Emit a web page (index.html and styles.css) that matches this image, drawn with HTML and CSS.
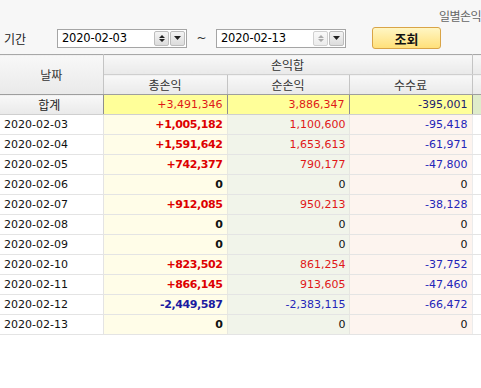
FILE: index.html
```html
<!DOCTYPE html>
<html lang="ko">
<head>
    <meta charset="UTF-8">
    <title>일별손익</title>
    <link rel="stylesheet" href="styles.css">
</head>
<body>
    <div class="top">
        <div class="title">일별손익</div>
        <div class="search">
            <span class="label">기간</span>
            <div class="date-box">
                <span class="date-text">2020-02-03</span>
                <span class="spin">
                    <svg width="10" height="9" viewBox="0 0 10 9"><path d="M5 1 L8 4 L2 4 Z M2 5 L8 5 L5 8 Z" fill="#222"/></svg>
                </span>
                <span class="drop">
                    <svg width="7" height="4" viewBox="0 0 7 4"><path d="M0 0 L7 0 L3.5 4 Z" fill="#222"/></svg>
                </span>
            </div>
            <span class="tilde">~</span>
            <div class="date-box">
                <span class="date-text">2020-02-13</span>
                <span class="spin disabled">
                    <svg width="10" height="9" viewBox="0 0 10 9"><path d="M5 1 L8 4 L2 4 Z M2 5 L8 5 L5 8 Z" fill="#aaa"/></svg>
                </span>
                <span class="drop">
                    <svg width="7" height="4" viewBox="0 0 7 4"><path d="M0 0 L7 0 L3.5 4 Z" fill="#222"/></svg>
                </span>
            </div>
            <button class="btn-search">조회</button>
        </div>
    </div>

    <table class="grid">
        <colgroup>
            <col class="c-date">
            <col class="c-total">
            <col class="c-net">
            <col class="c-fee">
            <col class="c-rest">
        </colgroup>
        <thead>
            <tr class="h1">
                <th rowspan="2">날짜</th>
                <th colspan="3">손익합</th>
                <th></th>
            </tr>
            <tr class="h2">
                <th>총손익</th>
                <th>순손익</th>
                <th>수수료</th>
                <th></th>
            </tr>
        </thead>
        <tbody id="rows">
            <tr class="sum">
                <td class="date">합계</td>
                <td class="red">+3,491,346</td>
                <td class="red">3,886,347</td>
                <td class="blue">-395,001</td>
                <td class="rest"></td>
            </tr>
        </tbody>
    </table>

    <script>
        // daily rows: date, total, net, fee
        const data = [
            ['2020-02-03', '+1,005,182', '1,100,600', '-95,418'],
            ['2020-02-04', '+1,591,642', '1,653,613', '-61,971'],
            ['2020-02-05', '+742,377', '790,177', '-47,800'],
            ['2020-02-06', '0', '0', '0'],
            ['2020-02-07', '+912,085', '950,213', '-38,128'],
            ['2020-02-08', '0', '0', '0'],
            ['2020-02-09', '0', '0', '0'],
            ['2020-02-10', '+823,502', '861,254', '-37,752'],
            ['2020-02-11', '+866,145', '913,605', '-47,460'],
            ['2020-02-12', '-2,449,587', '-2,383,115', '-66,472'],
            ['2020-02-13', '0', '0', '0']
        ];

        function tone(v) {
            if (v === '0') return 'zero';
            return v.startsWith('-') ? 'blue' : 'red';
        }

        const body = document.getElementById('rows');
        data.forEach(r => {
            const tr = document.createElement('tr');
            tr.className = 'row';
            tr.innerHTML = `
                <td class="date">${r[0]}</td>
                <td class="total ${tone(r[1])}">${r[1]}</td>
                <td class="net ${tone(r[2])}">${r[2]}</td>
                <td class="fee ${tone(r[3])}">${r[3]}</td>
                <td class="rest"></td>
            `;
            body.appendChild(tr);
        });
    </script>
</body>
</html>
```

FILE: styles.css
```css
body {
    margin: 0;
    width: 481px;
    height: 388px;
    overflow: hidden;
    background-color: #fff;
    font-family: "DejaVu Sans", "Noto Sans CJK KR", sans-serif;
    font-size: 11px;
    color: #111;
}

/* Top search area */
.top {
    background-color: #f7f7f7;
    height: 54px;
    position: relative;
}

.title {
    position: absolute;
    right: 0;
    top: 7px;
    width: 42px;
    overflow: hidden;
    white-space: nowrap;
    font-family: "Noto Sans CJK KR", sans-serif;
    font-size: 12px;
    letter-spacing: -0.5px;
    color: #666;
}

.search {
    display: flex;
    align-items: center;
    padding-top: 27px;
    padding-left: 4px;
}

.label {
    font-family: "Noto Sans CJK KR", sans-serif;
    font-size: 12px;
    width: 53px;
    color: #222;
}

.date-box {
    display: flex;
    align-items: center;
    width: 128px;
    height: 17px;
    border: 1px solid #a5a5a5;
    background-color: #fff;
    box-sizing: content-box;
}

.date-text {
    flex: 1;
    padding-left: 4px;
    font-family: "DejaVu Sans", sans-serif;
    font-size: 11.5px;
    letter-spacing: -0.2px;
    color: #000;
}

.spin, .drop {
    display: inline-flex;
    align-items: center;
    justify-content: center;
    height: 13px;
    border: 1px solid #bdbdbd;
    border-radius: 2px;
    background: linear-gradient(#f4f4f4, #dcdcdc);
    margin-right: 1px;
}

.spin {
    width: 13px;
}

.spin.disabled {
    background: linear-gradient(#f9f9f9, #ececec);
    border-color: #d0d0d0;
}

.drop {
    width: 13px;
}

.tilde {
    width: 29px;
    text-align: center;
    font-size: 12px;
    color: #333;
}

.btn-search {
    margin-left: 26px;
    width: 69px;
    height: 22px;
    border: 1px solid #d9a447;
    border-radius: 3px;
    background: linear-gradient(#fff6c4, #ffe07a);
    font-family: "Noto Sans CJK KR", sans-serif;
    font-weight: bold;
    font-size: 13px;
    color: #111;
    padding: 0;
}

/* Grid */
.grid {
    border-collapse: collapse;
    table-layout: fixed;
    width: 512px;
    border-top: 1px solid #a8a8a8;
}

.c-date { width: 103px; }
.c-total { width: 124px; }
.c-net { width: 122px; }
.c-fee { width: 123px; }
.c-rest { width: 40px; }

th {
    font-family: "Noto Sans CJK KR", sans-serif;
    font-weight: normal;
    font-size: 12px;
    color: #333;
    background: linear-gradient(#f8f8f8, #e9e9e9);
    border-right: 1px solid #c4c4c4;
    padding: 0;
    height: 19px;
}

.h1 th {
    border-bottom: 1px solid #cfcfcf;
}

.h2 th {
    border-bottom: 1px solid #9e9e9e;
}

.h1 th[rowspan] {
    border-bottom: 1px solid #9e9e9e;
}

td {
    height: 19px;
    padding: 0 4px 0 0;
    text-align: right;
    border-bottom: 1px solid #e4e4e4;
    white-space: nowrap;
}

td.date {
    text-align: left;
    padding-left: 4px;
    border-right: 1px solid #e4e4e4;
    color: #111;
}

.row .total {
    background-color: #fffde8;
    border-right: 1px solid #e8e8e0;
    font-weight: bold;
    letter-spacing: -0.4px;
}
.row .net { background-color: #f1f4ea; border-right: 1px solid #e6e6e0; padding-right: 3px; }
.row .fee { background-color: #fdf4ef; border-right: 1px solid #ececec; }

.red { color: #e01818; }
.blue { color: #2424b8; }
.zero { color: #111; }

.row .total.red { color: #dd0000; }
.row .total.blue { color: #1a1aa0; }

/* Sum row */
.sum td {
    background-color: #ffff99;
    border-right: 1px solid #8e8e8e;
    border-bottom: 1px solid #cfcfcf;
}

.sum td.date {
    text-align: center;
    padding-left: 0;
    font-family: "Noto Sans CJK KR", sans-serif;
    font-size: 12px;
    color: #222;
    background: linear-gradient(#f8f8f8, #e9e9e9);
}

.sum .blue { color: #202070; }

.sum td.rest {
    background-color: #dfeccb;
}
```
